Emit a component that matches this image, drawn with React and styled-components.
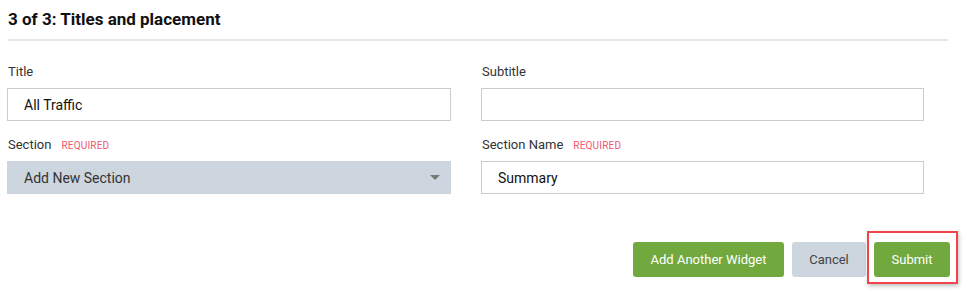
import React from 'react';
import styled, { createGlobalStyle } from 'styled-components';

const GlobalStyle = createGlobalStyle`
  html, body {
    margin: 0;
    padding: 0;
    background: #fff;
    font-family: Roboto, "Noto Sans", "Liberation Sans", sans-serif;
  }
`;

const Page = styled.div`
  width: 980px;
  height: 292px;
  padding: 9px 0 0 7px;
  box-sizing: border-box;
`;

const Heading = styled.h2`
  margin: 0 0 0 1px;
  font-size: 17px;
  font-weight: 700;
  color: #111;
  line-height: 20px;
`;

const Divider = styled.div`
  width: 940px;
  height: 2px;
  margin: 10px 0 0 1px;
  background: #e4e8ed;
`;

const Grid = styled.div`
  display: grid;
  grid-template-columns: 444px 443px;
  column-gap: 30px;
  row-gap: 13px;
  margin-top: 20px;
`;

const Field = styled.div`
  display: flex;
  flex-direction: column;
`;

const Label = styled.div`
  display: flex;
  align-items: baseline;
  gap: 10px;
  height: 18px;
  margin: 3px 0 6px 1px;
  font-size: 13px;
  color: #333;
`;

const Required = styled.span`
  font-size: 10px;
  color: #f0566f;
  letter-spacing: 0.2px;
`;

const Input = styled.div`
  height: 33px;
  box-sizing: border-box;
  border: 1px solid #cccccc;
  background: #fff;
  display: flex;
  align-items: center;
  padding-left: 16px;
  font-size: 14px;
  color: #111;
`;

const Select = styled.div`
  height: 33px;
  box-sizing: border-box;
  background: #cdd5df;
  display: flex;
  align-items: center;
  justify-content: space-between;
  padding: 0 11px 0 17px;
  font-size: 14px;
  color: #333;
`;

const Caret = styled.span`
  width: 0;
  height: 0;
  border-left: 5px solid transparent;
  border-right: 5px solid transparent;
  border-top: 5px solid #777;
`;

const Actions = styled.div`
  display: flex;
  justify-content: flex-end;
  gap: 8px;
  width: 943px;
  margin-top: 48px;
`;

const Button = styled.button`
  height: 35px;
  width: ${({ $w }) => $w}px;
  padding: 0;
  border: none;
  border-radius: 3px;
  font-family: inherit;
  font-size: 13px;
  background: ${({ $variant }) => ($variant === 'muted' ? '#cdd5df' : '#72a93f')};
  color: ${({ $variant }) => ($variant === 'muted' ? '#444' : '#fff')};
  cursor: pointer;
`;

const Highlight = styled.div`
  position: relative;
  &::after {
    content: '';
    position: absolute;
    left: -7px;
    top: -11px;
    right: -8px;
    bottom: -7px;
    border: 2px solid #f2444b;
    box-shadow: 1px 2px 4px rgba(0, 0, 0, 0.25);
    pointer-events: none;
  }
`;

export default function App() {
  return (
    <Page>
      <GlobalStyle />
      <Heading>3 of 3: Titles and placement</Heading>
      <Divider />
      <Grid>
        <Field>
          <Label>Title</Label>
          <Input>All Traffic</Input>
        </Field>
        <Field>
          <Label>Subtitle</Label>
          <Input />
        </Field>
        <Field>
          <Label>
            Section <Required>REQUIRED</Required>
          </Label>
          <Select>
            Add New Section
            <Caret />
          </Select>
        </Field>
        <Field>
          <Label>
            Section Name <Required>REQUIRED</Required>
          </Label>
          <Input>Summary</Input>
        </Field>
      </Grid>
      <Actions>
        <Button $w={151}>Add Another Widget</Button>
        <Button $variant="muted" $w={74}>Cancel</Button>
        <Highlight>
          <Button $w={76}>Submit</Button>
        </Highlight>
      </Actions>
    </Page>
  );
}
